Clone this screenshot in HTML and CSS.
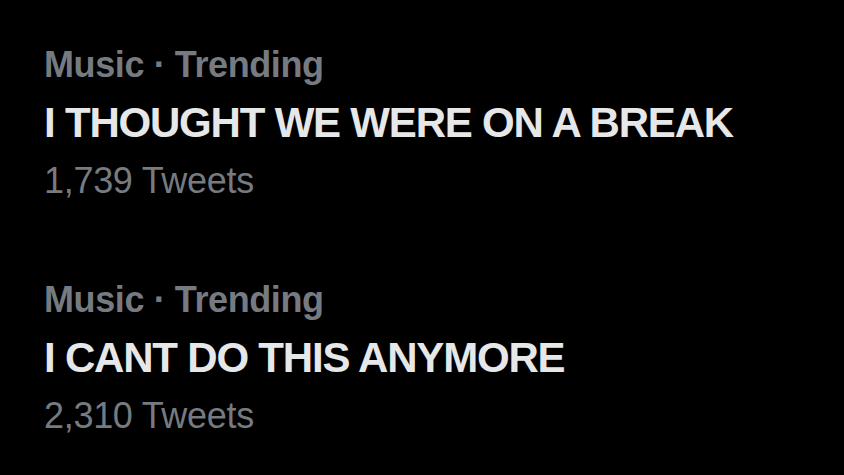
FILE: index.html
```html
<!DOCTYPE html>
<html lang="en">
<head>
<meta charset="utf-8">
<title>Trending</title>
<link rel="stylesheet" href="styles.css">
</head>
<body>
<main class="trends">
  <section class="trend">
    <div class="trend-meta">Music · Trending</div>
    <div class="trend-title">I THOUGHT WE WERE ON A BREAK</div>
    <div class="trend-count">1,739 Tweets</div>
  </section>
  <section class="trend">
    <div class="trend-meta">Music · Trending</div>
    <div class="trend-title">I CANT DO THIS ANYMORE</div>
    <div class="trend-count">2,310 Tweets</div>
  </section>
</main>
</body>
</html>
```
FILE: styles.css
```css
html, body {
  margin: 0;
  padding: 0;
  background: #000;
  height: 100%;
  overflow: hidden;
}
body {
  font-family: "Liberation Sans", Arial, sans-serif;
}
.trends {
  display: flex;
  flex-direction: column;
  gap: 59px;
  padding: 35px 0 0 44px;
}
.trend {
  display: flex;
  flex-direction: column;
}
.trend-meta {
  color: #767b81;
  font-size: 36px;
  font-weight: 700;
  line-height: 60px;
  letter-spacing: -0.4px;
}
.trend-title {
  color: #e6e7e8;
  font-size: 42px;
  font-weight: 700;
  line-height: 56px;
  letter-spacing: -1.2px;
}
.trend-count {
  color: #767b81;
  font-size: 36px;
  font-weight: 400;
  line-height: 60px;
  letter-spacing: -0.3px;
}
```
